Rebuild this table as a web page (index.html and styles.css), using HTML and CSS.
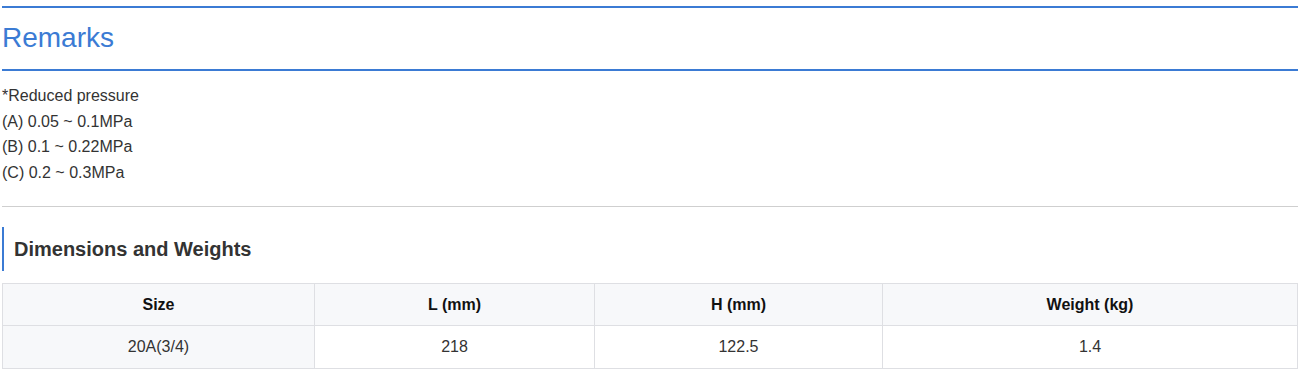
FILE: index.html
```html
<!DOCTYPE html>
<html lang="en">
<head>
<meta charset="utf-8">
<title>Remarks</title>
<link rel="stylesheet" href="styles.css">
</head>
<body>
<div class="page">
  <h2 class="section-title">Remarks</h2>
  <div class="remarks">
    <div>*Reduced pressure</div>
    <div>(A) 0.05 ~ 0.1MPa</div>
    <div>(B) 0.1 ~ 0.22MPa</div>
    <div>(C) 0.2 ~ 0.3MPa</div>
  </div>
  <hr class="divider">
  <h3 class="sub-title">Dimensions and Weights</h3>
  <table class="spec-table">
    <colgroup>
      <col class="c1"><col class="c2"><col class="c3"><col class="c4">
    </colgroup>
    <thead>
      <tr><th>Size</th><th>L (mm)</th><th>H (mm)</th><th>Weight (kg)</th></tr>
    </thead>
    <tbody>
      <tr><td class="first">20A(3/4)</td><td>218</td><td>122.5</td><td>1.4</td></tr>
    </tbody>
  </table>
</div>
</body>
</html>
```
FILE: styles.css
```css
html, body {
  margin: 0;
  padding: 0;
  background: #fff;
}
body {
  font-family: "Liberation Sans", Arial, sans-serif;
  color: #333;
}
.page {
  width: 1296px;
  margin-left: 2px;
  padding-top: 6px;
}
.section-title {
  margin: 0;
  border-top: 2px solid #3b7bd4;
  border-bottom: 2px solid #3b7bd4;
  padding: 9px 0 11px 0;
  font-size: 28px;
  line-height: 41px;
  font-weight: normal;
  color: #3b7bd4;
}
.remarks {
  margin-top: 12px;
  font-size: 16px;
  line-height: 25.6px;
  color: #333;
}
.divider {
  margin: 21px 0 0 0;
  border: 0;
  border-top: 1px solid #cfcfcf;
  height: 0;
}
.sub-title {
  margin: 20px 0 0 0;
  border-left: 2px solid #3b7bd4;
  padding-left: 10px;
  font-size: 20px;
  line-height: 44px;
  font-weight: bold;
  color: #333;
}
.spec-table {
  margin-top: 12px;
  width: 1296px;
  border-collapse: collapse;
  table-layout: fixed;
  font-size: 16px;
}
.c1 { width: 312px; }
.c2 { width: 280px; }
.c3 { width: 288px; }
.spec-table th,
.spec-table td {
  border: 1px solid #dedfe3;
  text-align: center;
  padding: 12px 8px;
}
.spec-table th {
  background: #f7f8fa;
  color: #111;
  font-weight: bold;
  line-height: 17px;
}
.spec-table td {
  color: #333;
  line-height: 18px;
}
.spec-table td.first {
  background: #f7f8fa;
}
```
